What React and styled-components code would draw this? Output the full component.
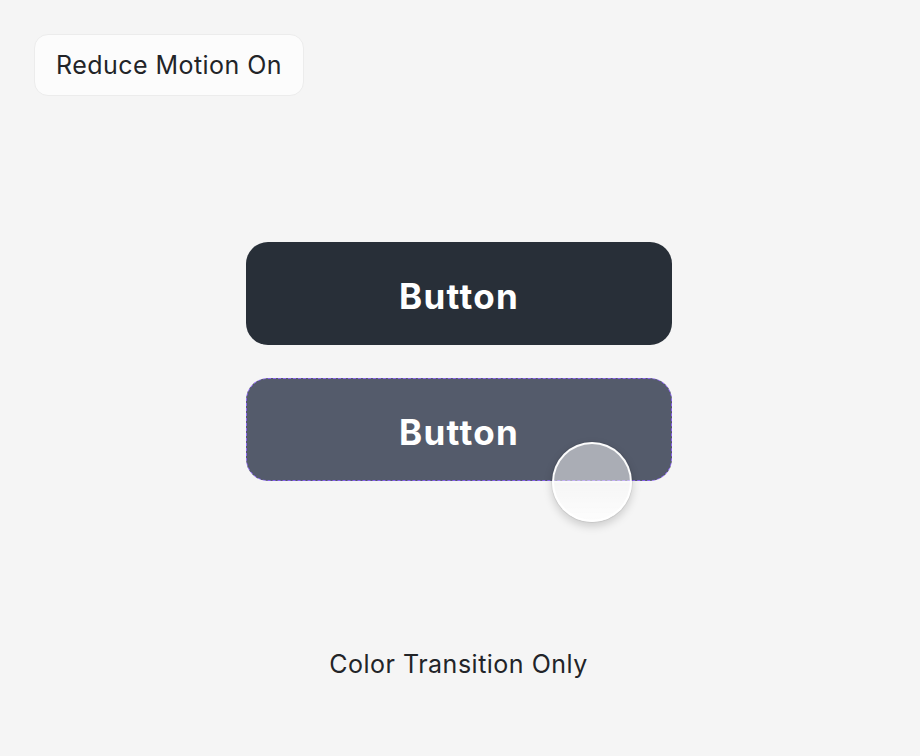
import React from "react";
import styled, { createGlobalStyle } from "styled-components";

const GlobalStyle = createGlobalStyle`
  html, body {
    margin: 0;
    padding: 0;
    background: #f5f5f5;
    font-family: Inter, "Noto Sans", "Liberation Sans", sans-serif;
  }
`;

const Page = styled.div`
  width: 920px;
  height: 756px;
  box-sizing: border-box;
  padding: 34px;
  display: flex;
  flex-direction: column;
  align-items: flex-start;
`;

const Toggle = styled.button`
  height: 62px;
  padding: 0 21px;
  border: 1px solid #ececec;
  border-radius: 14px;
  background: #fcfcfc;
  font-family: inherit;
  font-size: 25px;
  letter-spacing: 0.45px;
  line-height: 30px;
  color: #222428;
  cursor: pointer;
`;

const Stage = styled.div`
  align-self: stretch;
  display: flex;
  flex-direction: column;
  align-items: center;
  gap: 33px;
  margin-top: 146px;
  margin-left: -2px;
`;

const Btn = styled.button`
  position: relative;
  width: 426px;
  height: 103px;
  padding: 4px 0 0;
  border-radius: 22px;
  border: 1px ${p => (p.$focused ? "dashed #8a63f0" : "solid transparent")};
  background: ${p => (p.$pressed ? "#545b6b" : "#282f38")};
  color: #ffffff;
  font-family: inherit;
  font-size: 35px;
  letter-spacing: 1.3px;
  line-height: 40px;
  font-weight: 700;
  cursor: pointer;
`;

const Touch = styled.span`
  position: absolute;
  left: 305px;
  top: 63px;
  width: 76px;
  height: 76px;
  border-radius: 50%;
  border: 2px solid rgba(255, 255, 255, 0.95);
  background: linear-gradient(to bottom, rgba(255, 255, 255, 0.5) 50%, rgba(255, 255, 255, 0.15) 52%, rgba(255, 255, 255, 0.75) 100%);
  box-shadow: 0 4px 10px rgba(0, 0, 0, 0.18), 0 0 0 1px rgba(0, 0, 0, 0.06);
  pointer-events: none;
`;

const Caption = styled.div`
  align-self: stretch;
  text-align: center;
  margin-top: 168px;
  margin-left: -3px;
  font-size: 25px;
  letter-spacing: 0.5px;
  line-height: 30px;
  color: #222428;
`;

export default function App() {
  return (
    <>
      <GlobalStyle />
      <Page>
        <Toggle>Reduce Motion On</Toggle>
        <Stage>
          <Btn>Button</Btn>
          <Btn $pressed $focused>
            Button
            <Touch />
          </Btn>
        </Stage>
        <Caption>Color Transition Only</Caption>
      </Page>
    </>
  );
}
